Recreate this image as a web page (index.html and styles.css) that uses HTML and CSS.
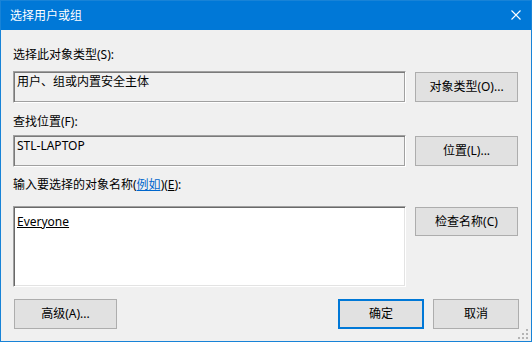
FILE: index.html
```html
<!DOCTYPE html>
<html lang="zh-CN">
<head>
<meta charset="utf-8">
<title>选择用户或组</title>
<link rel="stylesheet" href="styles.css">
</head>
<body>
<div class="window">
  <div class="titlebar">
    <span class="title">选择用户或组</span>
    <svg class="close" width="10" height="10" viewBox="0 0 10 10" aria-hidden="true">
      <path d="M0.5 0.5 L9.5 9.5 M9.5 0.5 L0.5 9.5" stroke="#ffffff" stroke-width="1.1" fill="none"/>
    </svg>
  </div>
  <div class="content">
    <div class="label l1">选择此对象类型(S):</div>
    <div class="row r1">
      <div class="field ro"><span class="ftext">用户、组或内置安全主体</span></div>
      <div class="btn side">对象类型(O)...</div>
    </div>
    <div class="label l2">查找位置(F):</div>
    <div class="row r2">
      <div class="field ro"><span class="ftext">STL-LAPTOP</span></div>
      <div class="btn side">位置(L)...</div>
    </div>
    <div class="label l3">输入要选择的对象名称(<span class="link">例如</span>)(<u>E</u>):</div>
    <div class="row r3">
      <div class="field edit"><span class="ftext name">Everyone</span></div>
      <div class="btn side check">检查名称(C)</div>
    </div>
    <div class="bottom">
      <div class="btn adv">高级(A)...</div>
      <div class="spacer"></div>
      <div class="btn ok">确定</div>
      <div class="btn cancel">取消</div>
    </div>
  </div>
  <svg class="grip" width="12" height="12" viewBox="0 0 12 12" aria-hidden="true">
    <rect x="8" y="0" width="2" height="2" fill="#b4b4b4"/>
    <rect x="4" y="4" width="2" height="2" fill="#b4b4b4"/>
    <rect x="8" y="4" width="2" height="2" fill="#b4b4b4"/>
    <rect x="0" y="8" width="2" height="2" fill="#b4b4b4"/>
    <rect x="4" y="8" width="2" height="2" fill="#b4b4b4"/>
    <rect x="8" y="8" width="2" height="2" fill="#b4b4b4"/>
  </svg>
</div>
</body>
</html>
```
FILE: styles.css
```css
* { box-sizing: border-box; }
html, body { margin: 0; padding: 0; }
body {
  width: 532px;
  height: 342px;
  overflow: hidden;
  font-family: "Noto Sans", "Noto Sans CJK SC", sans-serif;
  font-size: 12px;
  line-height: 16px;
  color: #000;
  background: #f0f0f0;
}
.window {
  position: relative;
  width: 532px;
  height: 342px;
  border: 1px solid #1883d7;
  background: #f0f0f0;
  display: flex;
  flex-direction: column;
}
.titlebar {
  height: 29px;
  background: #0078d7;
  color: #fff;
  display: flex;
  align-items: center;
  padding-left: 9px;
  padding-right: 10px;
}
.title { flex: 1; font-size: 12px; padding-top: 1px; }
.close { display: block; margin-top: -1px; }
.content {
  padding: 0 12px 0 12px;
  display: flex;
  flex-direction: column;
}
.label { height: 16px; white-space: nowrap; }
.l1 { margin-top: 17px; }
.l2 { margin-top: 11px; }
.l3 { margin-top: 10px; }
.link { color: #0066cc; text-decoration: underline; }
.row {
  display: grid;
  grid-template-columns: 393px 103px;
  column-gap: 9px;
  align-items: start;
}
.r1 { margin-top: 8px; }
.r2 { margin-top: 5px; }
.r3 { margin-top: 13px; }
.field {
  height: 32px;
  border-style: solid;
  border-width: 1px;
  border-color: #a0a0a0 #ffffff #ffffff #a0a0a0;
  padding: 2px 2px;
  white-space: nowrap;
}
.ro {
  background: #f0f0f0;
  box-shadow: inset 1px 1px 0 #7a7a7a, inset -1px -1px 0 #a0a0a0;
}
.edit {
  height: 81px;
  background: #ffffff;
  box-shadow: inset 1px 1px 0 #696969, inset -1px -1px 0 #e3e3e3;
  padding-top: 7px;
}
.ftext { display: block; padding-left: 1px; }
.name { text-decoration: underline; }
.btn {
  height: 30px;
  background: #e1e1e1;
  border: 1px solid #adadad;
  display: flex;
  align-items: center;
  justify-content: center;
  white-space: nowrap;
}
.side { margin-top: 1px; }
.check { height: 29px; }
.bottom {
  margin-top: 12px;
  display: flex;
  align-items: center;
  column-gap: 9px;
}
.adv { width: 103px; margin-left: 1px; }
.spacer { flex: 1; }
.ok { width: 86px; border: 2px solid #0078d7; }
.cancel { width: 86px; }
.grip {
  position: absolute;
  right: 1px;
  bottom: 0px;
}
```
